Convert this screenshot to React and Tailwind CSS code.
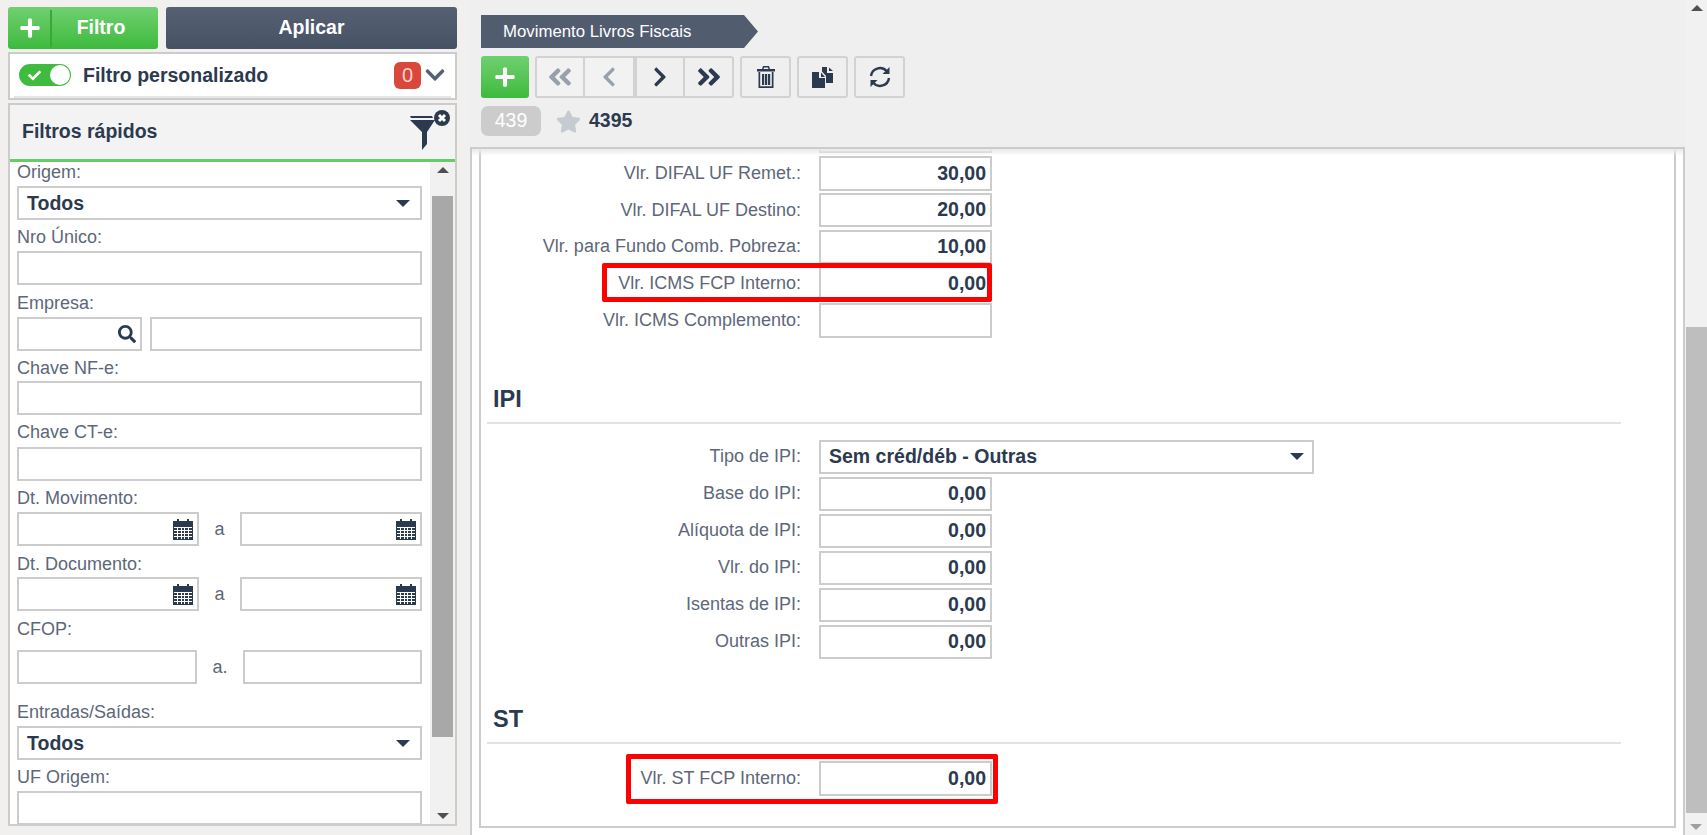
import React from 'react';
import { FaPlus, FaSearch, FaStar, FaChevronDown, FaChevronLeft, FaChevronRight, FaAngleDoubleLeft, FaAngleDoubleRight, FaCheck } from 'react-icons/fa';

const fontClass = "font-['Liberation_Sans',Arial,sans-serif]";
const boxClass = 'border-2 border-[#cccccc] bg-white';

const Caret = () => (
  <span className="w-0 h-0 border-x-[7px] border-x-transparent border-t-[7px] border-t-[#2c3a50]" />
);

const CalendarIcon = () => (
  <svg width="20" height="21" viewBox="0 0 20 21" className="shrink-0">
    <path fill="#2c3a50" d="M4 0h2v2h8V0h2v2h4v19H0V2h4z" />
    <path stroke="#fff" strokeWidth="1" d="M1 8.5h18M1 11.5h18M1 14.5h18M1 17.5h18M4.5 8v12M8.5 8v12M11.5 8v12M15.5 8v12" />
  </svg>
);

const FilterIcon = () => (
  <svg width="40" height="41" viewBox="0 0 40 41" className="mb-[6px]">
    <path fill="#2c3a50" d="M0 7h22l1 2H1zM0 11h25l-8 12v12l-5 6V23z" />
    <circle cx="32" cy="9" r="8" fill="#2c3a50" />
    <path stroke="#fff" strokeWidth="3" d="M29 6l6 6M35 6l-6 6" />
  </svg>
);

const TrashIcon = () => (
  <svg width="18" height="22" viewBox="0 0 18 22">
    <path fill="#2c3a50" d="M6 0h6l1 3h5v2.500H0V3h5zM7 1.500L6.600 3h4.800L11 1.500zM1.500 6h15v16h-15zM3.200 20.300h11.600V6H3.200z" fillRule="evenodd" />
    <path fill="#2c3a50" d="M5 8h2.200v11H5zM8 8h2.200v11H8zM11 8h2.200v11H11z" />
  </svg>
);

const CopyIcon = () => (
  <svg width="22" height="22" viewBox="0 0 22 22">
    <path fill="#2c3a50" d="M0 6h7v6h6v10H0zM9 6.500V11h4z" />
    <path fill="#2c3a50" d="M10 1h5v6h6v10h-7v-7L10 5.500zM17 1.500V5h4z" />
  </svg>
);

const RefreshIcon = () => (
  <svg width="22" height="22" viewBox="0 0 22 22" fill="none">
    <path stroke="#2c3a50" strokeWidth="2.400" d="M2 10a9 9 0 0 1 15.500-5M20 12a9 9 0 0 1-15.500 5" />
    <path fill="#2c3a50" d="M20.500 1v7h-7zM1.500 21v-7h7z" />
  </svg>
);

const Label = ({ children, className = '' }) => (
  <div className={`h-5 leading-5 text-[18px] text-[#5d6779] ${className}`}>{children}</div>
);

const Select = ({ value }) => (
  <div className={`${boxClass} h-[34px] w-full flex items-center justify-between pl-[8px] pr-[10px] pt-[1px] font-bold text-[19.500px] text-[#2c3a50]`}>
    {value}
    <Caret />
  </div>
);

const TextBox = ({ className = 'w-full', children }) => (
  <div className={`${boxClass} h-[34px] flex items-center justify-end pr-[4px] shrink-0 ${className}`}>{children}</div>
);

const DateRange = () => (
  <div className="flex items-center">
    <TextBox className="w-[182px]"><CalendarIcon /></TextBox>
    <span className="w-[41px] text-center text-[18px] text-[#5d6779]">a</span>
    <TextBox className="w-[182px]"><CalendarIcon /></TextBox>
  </div>
);

const Scrollbar = ({ className, thumbClass, arrowUp, arrowDown }) => (
  <div className={`relative shrink-0 bg-[#f1f1f1] ${className}`}>
    <div className="h-4 flex items-center justify-center">
      <span className={`w-0 h-0 border-x-[6px] border-x-transparent border-b-[6px] ${arrowUp}`} />
    </div>
    <div className={`absolute ${thumbClass}`} />
    <div className="absolute bottom-0 left-0 right-0 h-4 flex items-center justify-center">
      <span className={`w-0 h-0 border-x-[6px] border-x-transparent border-t-[6px] ${arrowDown}`} />
    </div>
  </div>
);

const Sidebar = () => (
  <aside className="w-[470px] shrink-0 pl-2 pt-[7px]">
    <div className="w-[449px]">
      <div className="flex gap-2 h-[42px]">
        <button className="w-[150px] flex rounded-[3px] bg-gradient-to-b from-[#6fd06f] to-[#3cba3c] text-white font-bold text-[19.500px] items-center">
          <span className="w-[43px] h-[37px] flex items-center justify-center border-r-2 border-[#39a839] ml-[1px]">
            <FaPlus size={22} />
          </span>
          <span className="flex-1 text-center pr-[8px]">Filtro</span>
        </button>
        <button className="flex-1 rounded-[3px] bg-gradient-to-b from-[#566073] to-[#465263] text-white font-bold text-[19.500px]">Aplicar</button>
      </div>

      <div className={`${boxClass} mt-[3px] h-[48px] flex flex-col`}>
        <div className="flex-1 flex items-center pl-[9px] pr-[9px]">
          <div className="w-[52px] h-[22px] rounded-full bg-[#3fbb3f] flex items-center justify-between pl-[9px] pr-[1px] shrink-0">
            <FaCheck size={13} color="#fff" />
            <span className="w-[20px] h-[20px] rounded-full bg-white" />
          </div>
          <span className="ml-[12px] pt-[1px] font-bold text-[19.500px] text-[#2c3a50] flex-1">Filtro personalizado</span>
          <span className="w-[27px] h-[27px] rounded-[6px] bg-[#d9483b] text-[#f5d5d0] text-[20px] flex items-center justify-center">0</span>
          <FaChevronDown size={22} color="#566073" className="ml-[3px]" />
        </div>
        <div className="mx-1 h-[2px] bg-[#e6e6e6]" />
      </div>

      <div className="mt-[3px] h-[723px] border-2 border-[#cccccc] flex flex-col overflow-hidden">
        <div className="h-[57px] shrink-0 bg-[#f3f3f3] border-b-[3px] border-[#66cc66] flex items-center justify-between pl-[12px] pr-[5px]">
          <span className="font-bold text-[19.500px] text-[#2c3a50]">Filtros rápidos</span>
          <FilterIcon />
        </div>
        <div className="flex flex-1 min-h-0">
          <div className="flex-1 bg-white pl-[7px] pr-[8px] overflow-hidden">
            <Label className="mb-1">Origem:</Label>
            <Select value="Todos" />
            <Label className="mt-[7px] mb-1">Nro Único:</Label>
            <TextBox />
            <Label className="mt-[8px] mb-[4px]">Empresa:</Label>
            <div className="flex gap-2">
              <TextBox className="w-[125px]"><FaSearch size={18} color="#2c3a50" /></TextBox>
              <TextBox className="flex-1" />
            </div>
            <Label className="mt-[7px] mb-[3px]">Chave NF-e:</Label>
            <TextBox />
            <Label className="mt-[7px] mb-[5px]">Chave CT-e:</Label>
            <TextBox />
            <Label className="mt-[7px] mb-[4px]">Dt. Movimento:</Label>
            <DateRange />
            <Label className="mt-[8px] mb-[3px]">Dt. Documento:</Label>
            <DateRange />
            <Label className="mt-[8px] mb-[11px]">CFOP:</Label>
            <div className="flex items-center">
              <TextBox className="w-[180px]" />
              <span className="w-[46px] text-center text-[18px] text-[#5d6779]">a.</span>
              <TextBox className="flex-1" />
            </div>
            <Label className="mt-[18px] mb-[4px]">Entradas/Saídas:</Label>
            <Select value="Todos" />
            <Label className="mt-[7px] mb-1">UF Origem:</Label>
            <TextBox />
          </div>
          <Scrollbar
            className="w-[25px]"
            thumbClass="left-[2px] right-[2px] top-[34px] h-[541px] bg-[#a8a8a8]"
            arrowUp="border-b-[#505050]"
            arrowDown="border-t-[#505050]"
          />
        </div>
      </div>
    </div>
  </aside>
);

const ToolButton = ({ className = 'rounded-[3px] w-[51px]', children }) => (
  <button className={`h-[42px] border-2 border-[#d2d2d2] flex items-center justify-center ${className}`}>{children}</button>
);

const Header = () => (
  <div className="h-[147px] shrink-0 bg-[#efefef] pl-[11px] pt-[15px]">
    <div className="w-[277px] h-[33px] bg-[#525c6f] text-white text-[16.800px] leading-[33px] pl-[22px] [clip-path:polygon(0_0,263px_0,100%_50%,263px_100%,0_100%)]">
      Movimento Livros Fiscais
    </div>
    <div className="flex mt-[8px] gap-[6px]">
      <button className="w-[48px] h-[42px] rounded-[3px] bg-gradient-to-b from-[#6fd06f] to-[#3cba3c] flex items-center justify-center">
        <FaPlus size={22} color="#fff" />
      </button>
      <div className="flex w-[199px]">
        <ToolButton className="rounded-l-[3px] bg-[#f2f2f2] w-[50px]"><FaAngleDoubleLeft size={28} color="#98a0ab" /></ToolButton>
        <ToolButton className="bg-[#f2f2f2] -ml-[2px] w-[52px]"><FaChevronLeft size={22} color="#98a0ab" /></ToolButton>
        <ToolButton className="w-[50px]"><FaChevronRight size={22} color="#2c3a50" /></ToolButton>
        <ToolButton className="rounded-r-[3px] -ml-[2px] w-[51px]"><FaAngleDoubleRight size={28} color="#2c3a50" /></ToolButton>
      </div>
      <ToolButton><TrashIcon /></ToolButton>
      <ToolButton><CopyIcon /></ToolButton>
      <ToolButton><RefreshIcon /></ToolButton>
    </div>
    <div className="flex items-center mt-[8px]">
      <span className="w-[60px] h-[30px] rounded-[7px] bg-[#cccccc] text-white text-[19.500px] flex items-center justify-center">439</span>
      <FaStar size={25} color="#c6cad1" className="ml-[15px]" />
      <span className="ml-[8px] font-bold text-[19.500px] text-[#2c3a50]">4395</span>
    </div>
  </div>
);

const Row = ({ label, value, children }) => (
  <div className="flex items-center h-[34.500px] gap-[18px]">
    <span className="w-[320px] text-right text-[18px] text-[#5d6779]">{label}</span>
    {children || (
      <div className={`${boxClass} w-[173px] h-full flex items-center justify-end pr-[4px] font-bold text-[19.500px] text-[#2c3a50]`}>{value}</div>
    )}
  </div>
);

const SectionTitle = ({ children, className }) => (
  <div className={className}>
    <h2 className="pl-[12px] font-bold text-[23.500px] leading-[24px] text-[#2c3a50]">{children}</h2>
    <div className="mt-[11px] ml-[6px] w-[1134px] h-[2px] bg-[#e2e2e2]" />
  </div>
);

const Content = () => (
  <div className="relative flex-1 min-h-0 border-x-2 border-t-2 border-[#cccccc] bg-white px-[7px]">
    <div className="absolute top-0 left-0 right-0 h-[7px] bg-gradient-to-b from-[#e9e9e9] to-white/0" />
    <div className="h-[679px] border-x-2 border-b-2 border-[#cccccc] overflow-hidden">
      <div className="ml-[338px] w-[173px] h-[4px] border-x-2 border-b-2 border-[#cccccc]" />
      <div className="flex flex-col gap-[2.300px] mt-[3px]">
        <Row label="Vlr. DIFAL UF Remet.:" value="30,00" />
        <Row label="Vlr. DIFAL UF Destino:" value="20,00" />
        <Row label="Vlr. para Fundo Comb. Pobreza:" value="10,00" />
        <div className="relative">
          <Row label="Vlr. ICMS FCP Interno:" value="0,00" />
          <div className="absolute -top-[3px] -bottom-[1px] left-[121px] w-[390px] border-[5px] border-[#ff0000] rounded-[2px]" />
        </div>
        <Row label="Vlr. ICMS Complemento:" value="" />
      </div>

      <SectionTitle className="mt-[49px]">IPI</SectionTitle>

      <div className="flex flex-col gap-[2.500px] mt-[16px]">
        <Row label="Tipo de IPI:">
          <div className={`${boxClass} w-[495px] h-full flex items-center justify-between pl-[8px] pr-[8px] font-bold text-[19.500px] text-[#2c3a50]`}>
            Sem créd/déb - Outras
            <Caret />
          </div>
        </Row>
        <Row label="Base do IPI:" value="0,00" />
        <Row label="Alíquota de IPI:" value="0,00" />
        <Row label="Vlr. do IPI:" value="0,00" />
        <Row label="Isentas de IPI:" value="0,00" />
        <Row label="Outras IPI:" value="0,00" />
      </div>

      <SectionTitle className="mt-[48px]">ST</SectionTitle>

      <div className="relative mt-[17px]">
        <Row label="Vlr. ST FCP Interno:" value="0,00" />
        <div className="absolute -top-[7px] -bottom-[8px] left-[145px] w-[372px] border-[5px] border-[#ff0000] rounded-[2px]" />
      </div>
    </div>
  </div>
);

export default function App() {
  return (
    <div className={`flex w-[1707px] h-[835px] overflow-hidden bg-[#f1f0ee] ${fontClass}`}>
      <Sidebar />
      <main className="flex-1 flex flex-col min-w-0 bg-[#efefef]">
        <Header />
        <Content />
      </main>
      <Scrollbar
        className="w-[22px] pl-[1px]"
        thumbClass="left-[1px] right-0 top-[327px] h-[486px] bg-[#bebebe]"
        arrowUp="border-b-[#505050]"
        arrowDown="border-t-[#a0a0a0]"
      />
    </div>
  );
}
